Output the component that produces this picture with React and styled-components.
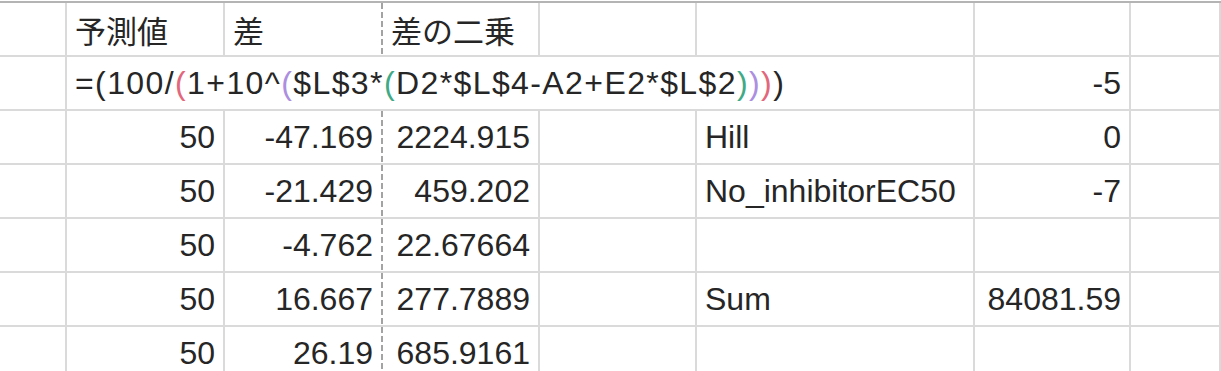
import React from 'react';
import styled, { createGlobalStyle } from 'styled-components';

const GlobalStyle = createGlobalStyle`
  html, body {
    margin: 0;
    padding: 0;
    background: #fff;
    overflow: hidden;
  }
  body {
    font-family: "Liberation Sans", "Noto Sans CJK JP", sans-serif;
  }
`

const Sheet = styled.div`
  display: grid;
  grid-template-columns: 67px 158px 158px 157px 157px 278px 156px 1fr;
  grid-auto-rows: 54px;
  width: 1221px;
  height: 371px;
  overflow: hidden;
  margin-top: 1px;
  border-top: 2px solid #b4b4b4;
  box-sizing: border-box;
  font-size: 32px;
  color: #262626;
`

const Cell = styled.div`
  box-sizing: border-box;
  display: flex;
  align-items: center;
  justify-content: ${(p) => (p.$align === 'right' ? 'flex-end' : 'flex-start')};
  padding: 0 8px;
  padding-top: 1px;
  white-space: nowrap;
  overflow: hidden;
  border-bottom: 2px solid #dadada;
  border-right: ${(p) => (p.$dashed ? 'none' : '2px solid #dadada')};
  ${(p) => p.$dashed && `
    padding-right: 10px;
    background: repeating-linear-gradient(to bottom, #a3a3a3 0 6px, transparent 6px 9px) right top / 2px 100% no-repeat;
  `}
  grid-column: ${(p) => (p.$span ? `span ${p.$span}` : 'auto')};
`

const Heading = styled.span`
  font-size: 31px;
`

const Formula = styled.span`
  letter-spacing: 1.4px;
`

const Paren = styled.span`
  color: ${(p) => p.$color};
`

const RED = '#e2677c'
const PURPLE = '#ac8fe0'
const GREEN = '#3faa86'

const headers = ['', '予測値', '差', '差の二乗', '', '', '', '']

const data = [
  ['', '50', '-47.169', '2224.915', '', 'Hill', '0', ''],
  ['', '50', '-21.429', '459.202', '', 'No_inhibitorEC50', '-7', ''],
  ['', '50', '-4.762', '22.67664', '', '', '', ''],
  ['', '50', '16.667', '277.7889', '', 'Sum', '84081.59', ''],
  ['', '50', '26.19', '685.9161', '', '', '', ''],
]

const isNum = (v) => v !== '' && !isNaN(Number(v))

export default function App() {
  return (
    <>
      <GlobalStyle />
      <Sheet>
        {headers.map((h, i) => (
          <Cell key={'h' + i} $dashed={i === 2}>
            {h && <Heading>{h}</Heading>}
          </Cell>
        ))}

        {/* 数式の行 */}
        <Cell />
        <Cell $span={5}>
          <Formula>
            =(100/<Paren $color={RED}>(</Paren>1+10^<Paren $color={PURPLE}>(</Paren>$L$3*<Paren $color={GREEN}>(</Paren>D2*$L$4-A2+E2*$L$2<Paren $color={GREEN}>)</Paren><Paren $color={PURPLE}>)</Paren><Paren $color={RED}>)</Paren>)
          </Formula>
        </Cell>
        <Cell $align="right">-5</Cell>
        <Cell />

        {data.map((row, r) =>
          row.map((v, c) => (
            <Cell key={r + '-' + c} $align={isNum(v) ? 'right' : 'left'} $dashed={c === 2}>
              {v}
            </Cell>
          ))
        )}
      </Sheet>
    </>
  )
}
